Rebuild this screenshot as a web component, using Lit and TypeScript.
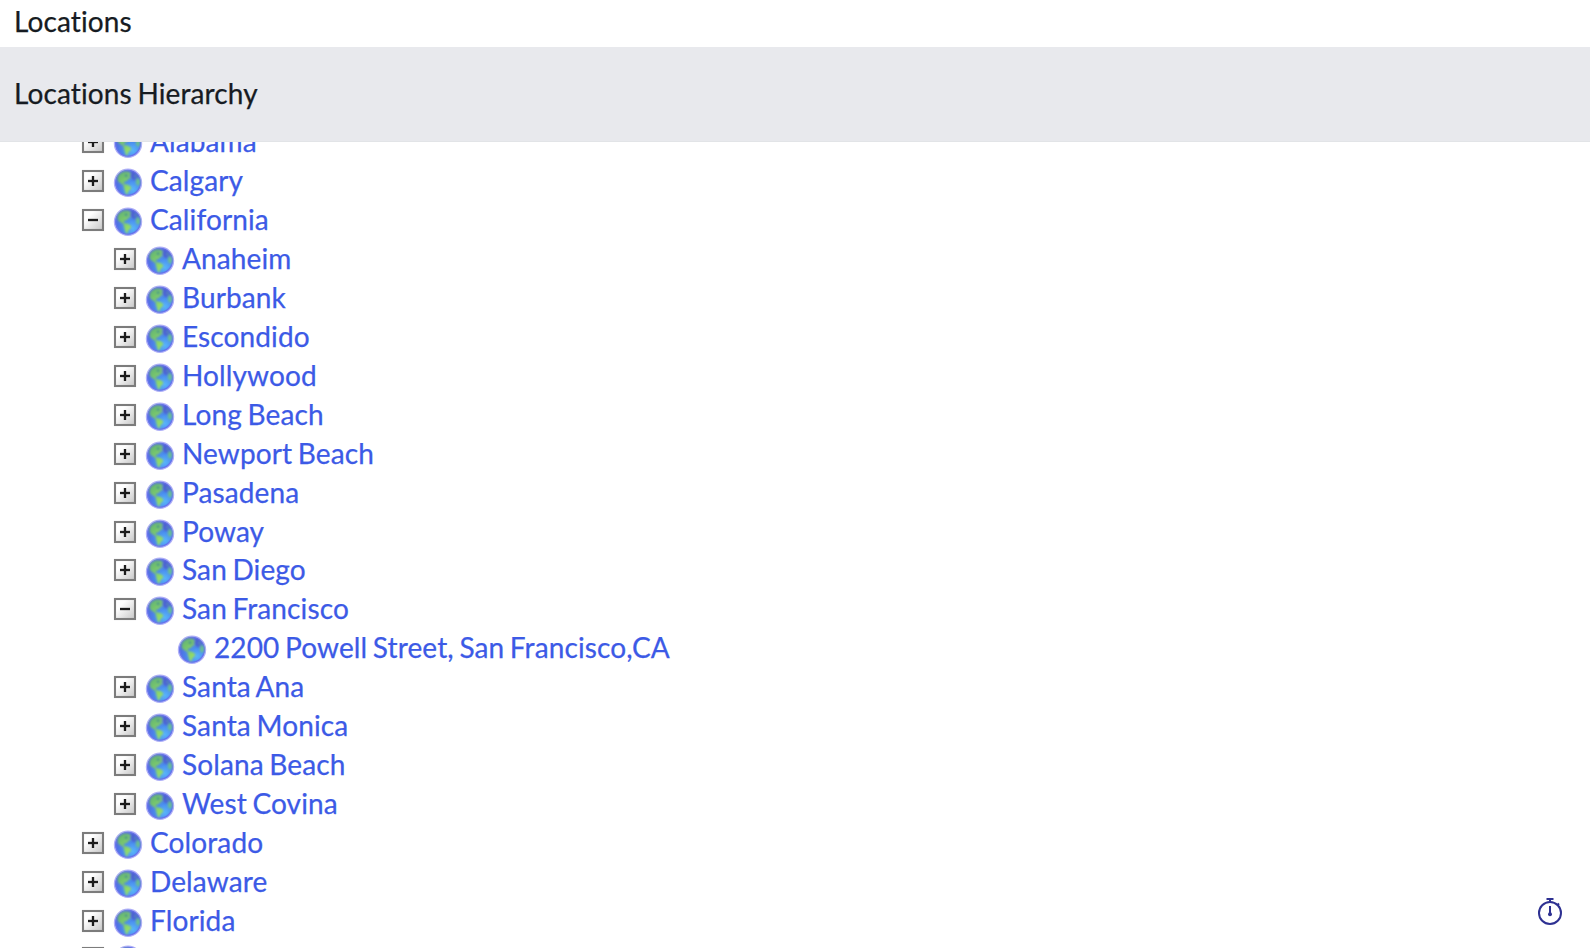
import { LitElement, html, svg, css } from "lit";
import { customElement } from "lit/decorators.js";
import { classMap } from "lit/directives/class-map.js";

interface Place {
  name: string;
  open?: boolean;
  leaf?: boolean;
  size?: "short" | "tight";
  children?: Place[];
}

const cities = (names: string[]): Place[] => names.map((name) => ({ name }));

const places: Place[] = [
  { name: "Alabama" },
  { name: "Calgary" },
  {
    name: "California",
    open: true,
    children: [
      ...cities(["Anaheim", "Burbank", "Escondido", "Hollywood", "Long Beach", "Newport Beach", "Pasadena"]),
      { name: "Poway", size: "short" },
      { name: "San Diego" },
      { name: "San Francisco", open: true, children: [{ name: "2200 Powell Street, San Francisco,CA", leaf: true }] },
      ...cities(["Santa Ana", "Santa Monica", "Solana Beach", "West Covina"]),
    ],
  },
  { name: "Colorado" },
  { name: "Delaware" },
  { name: "Florida", size: "tight" },
  { name: "" },
];

@customElement("tree-toggle")
class TreeToggle extends LitElement {
  static properties = { open: { type: Boolean } };
  declare open: boolean;
  static styles = css`
    :host { display: block; width: 22px; height: 22px; }
    svg { display: block; overflow: visible; }
  `;
  render() {
    return html`<svg width="22" height="22" viewBox="0 0 22 22">
      <defs>
        <linearGradient id="face" x1="0" y1="0" x2="1" y2="1">
          <stop offset=".3" stop-color="#fff" /><stop offset="1" stop-color="#c6c6c6" />
        </linearGradient>
        <filter id="soft" x="-10%" y="-10%" width="120%" height="120%"><feGaussianBlur stdDeviation=".35" /></filter>
      </defs>
      <g filter="url(#soft)">
        <rect x="1" y="1" width="20" height="20" fill="url(#face)" stroke="#7c7c7c" stroke-width="2.1" />
        <path d="M6 11H16" stroke="#1a1a1a" stroke-width="2.3" />
        ${this.open ? "" : svg`<path d="M11 6V16" stroke="#1a1a1a" stroke-width="2.3" />`}
      </g>
    </svg>`;
  }
}

@customElement("globe-icon")
class GlobeIcon extends LitElement {
  static styles = css`
    :host { display: block; width: 28px; height: 28px; }
    svg { display: block; overflow: visible; }
  `;
  render() {
    return html`<svg width="28" height="28" viewBox="0 0 28 28">
      <defs>
        <radialGradient id="sea" cx=".68" cy=".74" r=".75">
          <stop offset="0" stop-color="#58b4fa" /><stop offset=".45" stop-color="#4a8bee" /><stop offset="1" stop-color="#5263de" />
        </radialGradient>
        <linearGradient id="land" x1="0" y1="0" x2=".6" y2="1">
          <stop offset="0" stop-color="#5cb073" /><stop offset="1" stop-color="#98e065" />
        </linearGradient>
        <filter id="soft" x="-10%" y="-10%" width="120%" height="120%"><feGaussianBlur stdDeviation=".8" /></filter>
        <filter id="edge" x="-10%" y="-10%" width="120%" height="120%"><feGaussianBlur stdDeviation=".5" /></filter>
      </defs>
      <g filter="url(#edge)">
        <circle cx="14" cy="13.8" r="13.4" fill="url(#sea)" stroke="#b0b0f8" stroke-width="1.6" />
        <circle cx="14" cy="13.8" r="12.3" fill="none" stroke="#6674ec" stroke-width="1.3" />
      </g>
      <g filter="url(#soft)">
        <path d="M15 3L20 2.8L24.5 7L25.5 12L22 12L17.5 10L14.5 7Z" fill="#4c55c7" opacity=".65" />
        <path d="M6 4.5L10 2.5L15 2.8L17 5L15.5 7L17 9L14.5 9.7L13 12L10.5 12.7L9.6 14.2L11 15.2L13.5 15.5L17.3 18L16.5 20.5L14.5 22L13.5 25L12 25.3L10.8 21.5L9.7 18.3L9.8 16.4L7 14.5L4.3 12.8L3.5 10L4 7Z" fill="url(#land)" />
        <path d="M22.3 10L24.2 8.7L26 12L25.4 16L23.5 16.7L21.8 14Z" fill="#6cc28c" />
        <path d="M20.5 6.2L22 6L22.7 7.5L21.3 8Z" fill="#60a39a" />
        <path d="M11.5 5L14 6L12.8 8.4L10.6 7.6Z" fill="#43928c" />
      </g>
    </svg>`;
  }
}

@customElement("app-root")
class AppRoot extends LitElement {
  static styles = css`
    :host {
      display: flex;
      flex-direction: column;
      height: 948px;
      overflow: hidden;
      background: #fff;
      color: #161b22;
      font: 28px/39px Lato, sans-serif;
      font-variant-ligatures: none;
      letter-spacing: 0.12px;
      word-spacing: -1.7px;
      -webkit-text-stroke: 0.25px currentColor;
    }
    .title { flex: none; height: 47px; padding-left: 14px; line-height: 43px; }
    .subtitle {
      flex: none;
      box-sizing: border-box;
      height: 95px;
      padding-left: 14px;
      line-height: 93px;
      background: #e8e9ed;
      border-bottom: 1px solid #e2e4e7;
    }
    .tree { flex: 1; min-height: 0; overflow: hidden; padding-left: 82px; }
    .tree > .list { margin-top: -19px; }
    .list .list { padding-left: 32px; }
    .row { display: flex; height: 39px; line-height: 37px; color: #3c5ae6; white-space: nowrap; }
    .row.short { height: 38px; }
    .row.tight { height: 37px; }
    .row.leaf { padding-left: 32px; }
    tree-toggle { margin: 8px 10px 0 0; }
    globe-icon { margin: 7px 8px 0 0; }
    .timer { position: absolute; left: 1537px; top: 897px; }
  `;

  renderPlaces(list: Place[]): unknown {
    return html`<div class="list">
      ${list.map(
        (p) => html`
          <div class=${classMap({ row: true, leaf: !!p.leaf, short: p.size === "short", tight: p.size === "tight" })}>
            ${p.leaf ? "" : html`<tree-toggle .open=${!!p.open}></tree-toggle>`}
            <globe-icon></globe-icon>
            <span>${p.name}</span>
          </div>
          ${p.children ? this.renderPlaces(p.children) : ""}
        `
      )}
    </div>`;
  }

  render() {
    return html`
      <div class="title">Locations</div>
      <div class="subtitle">Locations Hierarchy</div>
      <div class="tree">${this.renderPlaces(places)}</div>
      <svg class="timer" width="26" height="29" viewBox="0 0 26 29" fill="none" stroke="#2e3192">
        <circle cx="13" cy="16" r="11" stroke-width="2" />
        <path d="M9.5 2H16.5M13 2V5" stroke-width="2" />
        <path d="M20 8.5L22 6.5" stroke-width="2" />
        <path d="M13 9V17" stroke-width="2" />
        <circle cx="13" cy="17.2" r="2" fill="#2e3192" stroke="none" />
      </svg>
    `;
  }
}
